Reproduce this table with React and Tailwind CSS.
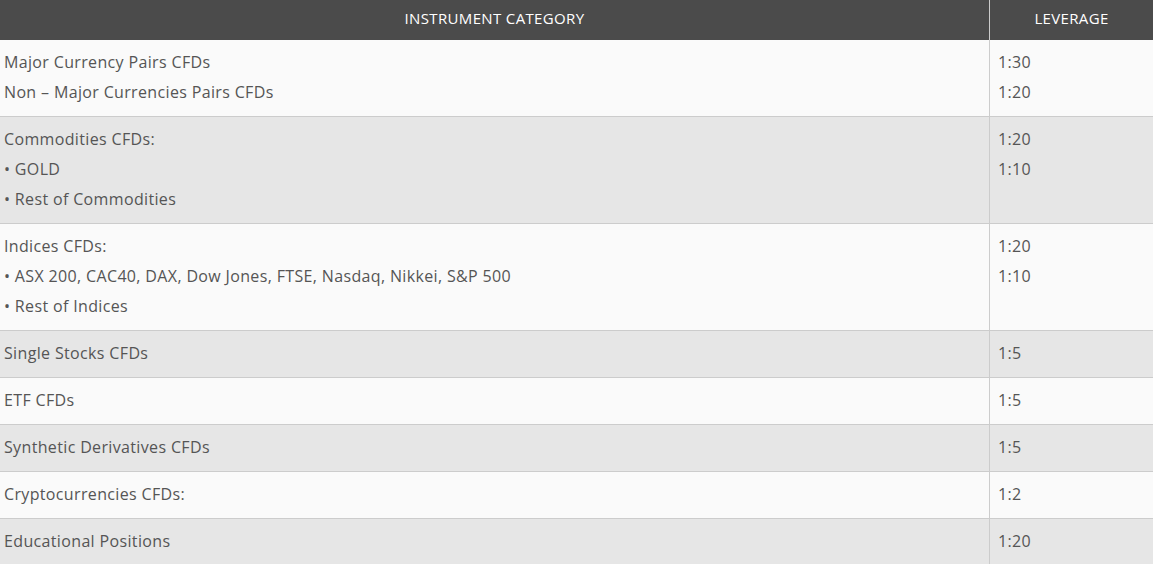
const rows = [
  { left: ['Major Currency Pairs CFDs', 'Non – Major Currencies Pairs CFDs'], right: ['1:30', '1:20'] },
  { left: ['Commodities CFDs:', '• GOLD', '• Rest of Commodities'], right: ['1:20', '1:10'] },
  { left: ['Indices CFDs:', '• ASX 200, CAC40, DAX, Dow Jones, FTSE, Nasdaq, Nikkei, S&P 500', '• Rest of Indices'], right: ['1:20', '1:10'] },
  { left: ['Single Stocks CFDs'], right: ['1:5'] },
  { left: ['ETF CFDs'], right: ['1:5'] },
  { left: ['Synthetic Derivatives CFDs'], right: ['1:5'] },
  { left: ['Cryptocurrencies CFDs:'], right: ['1:2'] },
  { left: ['Educational Positions'], right: ['1:20'] },
];

export default function App() {
  return (
    <div className="w-[1153px] h-[564px] overflow-hidden bg-white font-['Open_Sans',sans-serif] text-[#555] tracking-[0.35px]">
      <div className="grid grid-cols-[990px_1fr] h-[40px] bg-[#4b4b4b] text-white text-[15px] uppercase">
        <div className="flex items-center justify-center pb-[4px] border-r border-[#ccc]">Instrument Category</div>
        <div className="flex items-center justify-center pb-[4px]">Leverage</div>
      </div>
      {rows.map((row, i) => (
        <div
          key={i}
          className={`grid grid-cols-[990px_1fr] border-b border-[#ccc] text-[16px] leading-[30px] ${i % 2 === 0 ? 'bg-[#fafafa]' : 'bg-[#e6e6e6]'}`}
        >
          <div className="pt-[7px] pb-[9px] pl-1 border-r border-[#ccc]">
            {row.left.map((t) => (
              <div key={t}>{t}</div>
            ))}
          </div>
          <div className="pt-[7px] pb-[9px] pl-2">
            {row.right.map((t, j) => (
              <div key={j}>{t}</div>
            ))}
          </div>
        </div>
      ))}
    </div>
  );
}
